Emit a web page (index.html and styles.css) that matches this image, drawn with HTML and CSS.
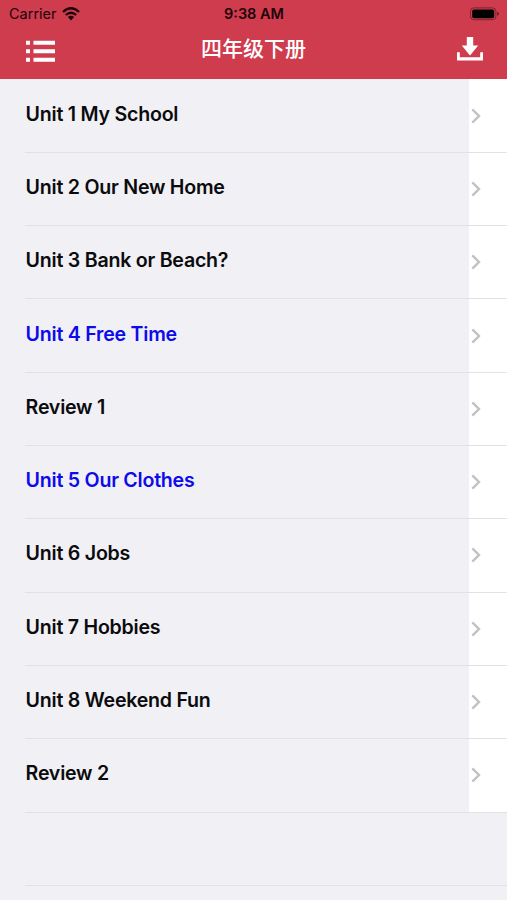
FILE: index.html
```
<!DOCTYPE html>
<html lang="zh-CN">
<head>
  <meta charset="UTF-8">
  <meta name="viewport" content="width=device-width, initial-scale=1.0">
  <title>四年级下册</title>
  <link rel="stylesheet" href="styles.css">
</head>
<body>

<header>
  <div class="status">
    <div class="carrier">
      <span>Carrier</span>
      <svg class="wifi" viewBox="0 0 18 14" width="18" height="14">
        <path d="M1 5 Q9 -2.4 17 5" />
        <path d="M3.8 8 Q9 3.4 14.2 8" />
        <path class="dot" d="M5.9 10 Q9 7.4 12.1 10 L9 13.4 Z" />
      </svg>
    </div>
    <span class="time">9:38 AM</span>
    <svg class="battery" viewBox="0 0 30 14" width="30" height="14">
      <rect class="shell" x="0.5" y="0.9" width="25.4" height="11.8" rx="3.2" />
      <rect x="2.2" y="2.5" width="22" height="8.7" rx="1.8" />
      <path d="M27.2 4.8 Q29 5.4 29 6.8 Q29 8.2 27.2 8.8 Z" opacity=".5" />
    </svg>
  </div>
  <nav>
    <svg class="menu" viewBox="0 0 29 23" width="29" height="23">
      <path d="M0 .7h4v4H0zM7.5 .7H29v4H7.5zM0 9.2h4v4H0zM7.5 9.2H29v4H7.5zM0 17.7h4v4H0zM7.5 17.7H29v4H7.5z" />
    </svg>
    <h1>四年级下册</h1>
    <svg class="download" viewBox="0 0 26 24" width="26" height="24">
      <path d="M9.8 0h6.4v8.5h5L13 18.5 4.8 8.5h5z" />
      <path d="M0 15.3h2.8v5h20.4v-5H26V23.5H0z" />
    </svg>
  </nav>
</header>

<ul class="list">
  <li class="row"><span class="name">Unit 1 My School</span><svg class="arrow" viewBox="0 0 10 16"><path d="M1.3 1.3L8 8L1.3 14.7" /></svg></li>
  <li class="row"><span class="name">Unit 2 Our New Home</span><svg class="arrow" viewBox="0 0 10 16"><path d="M1.3 1.3L8 8L1.3 14.7" /></svg></li>
  <li class="row"><span class="name">Unit 3 Bank or Beach?</span><svg class="arrow" viewBox="0 0 10 16"><path d="M1.3 1.3L8 8L1.3 14.7" /></svg></li>
  <li class="row blue"><span class="name">Unit 4 Free Time</span><svg class="arrow" viewBox="0 0 10 16"><path d="M1.3 1.3L8 8L1.3 14.7" /></svg></li>
  <li class="row"><span class="name">Review 1</span><svg class="arrow" viewBox="0 0 10 16"><path d="M1.3 1.3L8 8L1.3 14.7" /></svg></li>
  <li class="row blue"><span class="name">Unit 5 Our Clothes</span><svg class="arrow" viewBox="0 0 10 16"><path d="M1.3 1.3L8 8L1.3 14.7" /></svg></li>
  <li class="row"><span class="name">Unit 6 Jobs</span><svg class="arrow" viewBox="0 0 10 16"><path d="M1.3 1.3L8 8L1.3 14.7" /></svg></li>
  <li class="row"><span class="name">Unit 7 Hobbies</span><svg class="arrow" viewBox="0 0 10 16"><path d="M1.3 1.3L8 8L1.3 14.7" /></svg></li>
  <li class="row"><span class="name">Unit 8 Weekend Fun</span><svg class="arrow" viewBox="0 0 10 16"><path d="M1.3 1.3L8 8L1.3 14.7" /></svg></li>
  <li class="row"><span class="name">Review 2</span><svg class="arrow" viewBox="0 0 10 16"><path d="M1.3 1.3L8 8L1.3 14.7" /></svg></li>
  <li class="row empty"></li>
</ul>

</body>
</html>
```

FILE: styles.css
```
* {
  margin: 0;
  padding: 0;
  box-sizing: border-box;
}
body {
  height: 100vh;
  overflow: hidden;
  background-color: #f1f0f5;
  font-family: Inter, "Noto Sans CJK SC", sans-serif;
}
svg {
  display: block;
}

header {
  height: 79px;
  background-color: #cf3c4e;
}
.status {
  height: 27px;
  padding: 0 7px 0 9px;
  display: grid;
  grid-template-columns: 1fr auto 1fr;
  align-items: center;
  color: #1c0508;
  font-size: 14.5px;
}
.carrier {
  display: flex;
  align-items: center;
  gap: 5px;
}
.wifi {
  fill: none;
  stroke: #1c0508;
  stroke-width: 2.3;
}
.wifi .dot {
  fill: #1c0508;
  stroke: none;
}
.time {
  margin-right: 1px;
  font-size: 14.5px;
  font-weight: 600;
}
.battery {
  justify-self: end;
}
.battery .shell {
  fill: none;
  stroke: #1c0508;
  opacity: .45;
}
nav {
  height: 46px;
  padding: 0 24px 0 26px;
  display: flex;
  align-items: center;
  justify-content: space-between;
}
nav svg {
  fill: #fff;
}
.menu {
  margin-top: 3px;
}
.download {
  margin-top: -2px;
}
h1 {
  margin: -2px 5px 0 0;
  color: #fff;
  font-size: 21px;
  font-weight: 500;
  line-height: 30px;
}

.list {
  list-style: none;
}
.row {
  position: relative;
  height: 73.3px;
  padding-right: 26px;
  display: flex;
  align-items: center;
  justify-content: space-between;
  background: linear-gradient(to right, #f1f0f5 469px, #fff 469px);
}
/* separator starts at the text, not at the screen edge */
.row::after {
  content: "";
  position: absolute;
  left: 25px;
  right: 0;
  bottom: -0.6px;
  height: 1px;
  background-color: #e2e1e6;
  z-index: 1;
}
.name {
  padding: 0 0 4px 25.6px;
  color: #0b0b0d;
  font-size: 19.6px;
  font-weight: 600;
  line-height: 24px;
  letter-spacing: -0.24px;
}
.blue .name {
  color: #0d0bea;
}
.arrow {
  width: 10px;
  height: 16px;
  fill: none;
  stroke: #c2c2c5;
  stroke-width: 2.4;
}
.empty {
  background: none;
}
```
